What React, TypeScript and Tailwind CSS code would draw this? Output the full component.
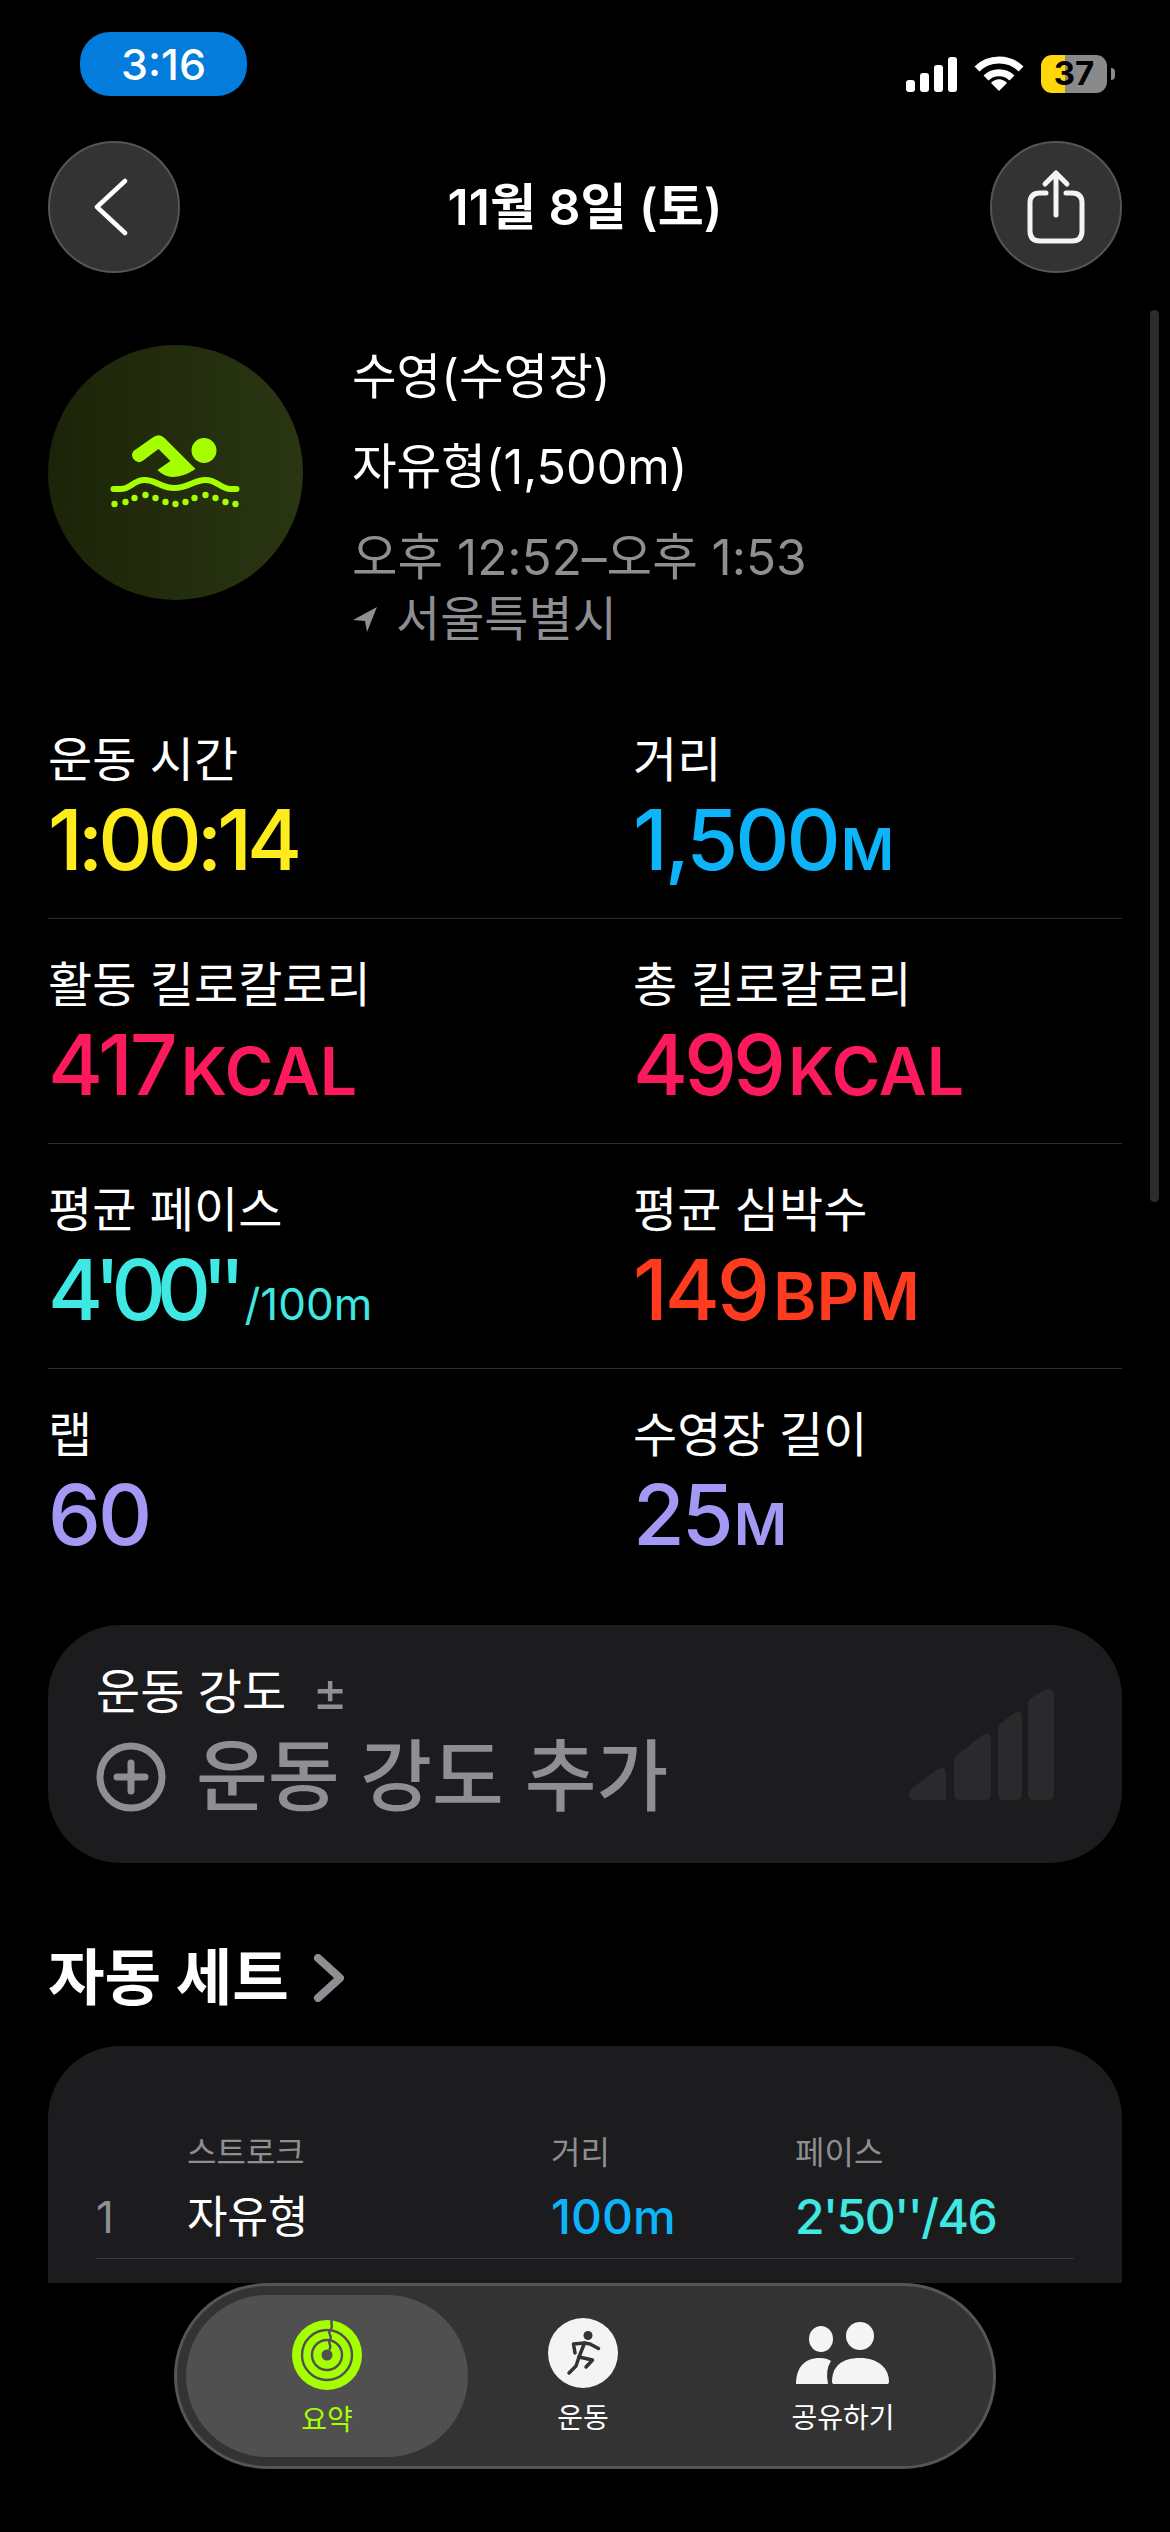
const font = { fontFamily: 'Inter, "Noto Sans CJK KR", sans-serif' };

const metrics = [
  [
    { label: '운동 시간', value: '1:00:14', unit: '', color: 'text-[#fdeb1c]', track: 'tracking-[-5px]' },
    { label: '거리', value: '1,500', unit: 'M', color: 'text-[#0db4f9]', track: 'tracking-[-3px]' },
  ],
  [
    { label: '활동 킬로칼로리', value: '417', unit: 'KCAL', color: 'text-[#fc1a5c]', track: 'tracking-[-3px]' },
    { label: '총 킬로칼로리', value: '499', unit: 'KCAL', color: 'text-[#fc1a5c]', track: 'tracking-[-4px]' },
  ],
  [
    { label: '평균 페이스', value: "4'00''", unit: '/100m', color: 'text-[#3fe8e2]', track: 'tracking-[-9px]', thin: true },
    { label: '평균 심박수', value: '149', unit: 'BPM', color: 'text-[#ff3b1f]', track: 'tracking-[-3px]' },
  ],
  [
    { label: '랩', value: '60', unit: '', color: 'text-[#a498f5]', track: 'tracking-[-3px]' },
    { label: '수영장 길이', value: '25', unit: 'M', color: 'text-[#a498f5]', track: 'tracking-[-3px]' },
  ],
];

const dots = [
  [34, 103], [45, 101], [54, 97], [65, 94], [75, 97], [85, 101], [95, 103],
  [105, 101], [114, 97], [125, 94], [135, 97], [145, 101], [155, 103],
];

function unitClass(unit: string, thin?: boolean) {
  if (thin) return 'ml-[8px] text-[44px] font-normal';
  if (unit === 'M') return 'ml-[3px] text-[58px] font-semibold';
  return 'ml-[6px] text-[66px] font-semibold';
}

function SwimIcon() {
  return (
    <svg width="200" height="130" viewBox="-4.5 7 200 130" fill="#a6ff00">
      <circle cx="123.5" cy="49.5" r="12.5" />
      <path d="M53 50 L73 36 Q79 32 84 37 L115 68 Q103 76 92 76 Q84 76 77 69 L90 60 L78 48 L62 60 Q57 63 53 58 Q50 54 53 50 Z" />
      <path
        d="M33 88 H40 C50 88 53 79 64 79 C76 79 80 87 94 87 C108 87 113 79 125 79 C137 79 140 88 150 88 H156"
        fill="none"
        stroke="#a6ff00"
        strokeWidth="6"
        strokeLinecap="round"
      />
      {dots.map(([x, y]) => (
        <circle key={x} cx={x} cy={y} r="3.2" />
      ))}
    </svg>
  );
}

function StatusBar() {
  return (
    <div className="flex h-[128px] items-start justify-between pl-[80px] pr-[55px] pt-[32px]">
      <div className="flex h-[64px] w-[167px] items-center justify-center rounded-[30px] bg-[#047cdc] text-[43px] font-medium text-white">
        3:16
      </div>
      <div className="mt-[23px] flex items-center">
        <svg width="52" height="35" viewBox="0 0 52 35" fill="#fff">
          <rect x="0" y="23" width="9" height="12" rx="3" />
          <rect x="14" y="16" width="9" height="19" rx="3" />
          <rect x="28" y="8" width="9" height="27" rx="3" />
          <rect x="42" y="0" width="9" height="35" rx="3" />
        </svg>
        <svg className="ml-[16px]" width="50" height="36" viewBox="0 0 50 36" fill="none" stroke="#fff" strokeWidth="7">
          <path d="M3 13 C15 1 35 1 47 13" />
          <path d="M12 22 C19 15 31 15 38 22" />
          <path d="M17 27 L25 35 L33 27 C28 22 22 22 17 27 Z" fill="#fff" stroke="none" />
        </svg>
        <div className="relative ml-[17px] flex h-[38px] w-[66px] items-center justify-center rounded-[11px] bg-[linear-gradient(90deg,#ffd60a_36%,#8a8a8a_36%)] text-[33px] font-bold text-black">
          37
        </div>
        <div className="ml-[4px] h-[12px] w-[4px] rounded-r-full bg-[#8a8a8a]" />
      </div>
    </div>
  );
}

function Header() {
  return (
    <div className="mt-[13px] flex items-center justify-between px-[48px]">
      <button className="grid h-[132px] w-[132px] place-items-center rounded-full border-2 border-[#555] bg-[#333]">
        <svg className="mr-[6px]" width="34" height="58" viewBox="0 0 34 58" fill="none" stroke="#fff" strokeWidth="4.5" strokeLinecap="round" strokeLinejoin="round">
          <path d="M31 3 L3 29 L31 55" />
        </svg>
      </button>
      <h1 className="text-[50px] font-semibold text-white">11월 8일 (토)</h1>
      <button className="grid h-[132px] w-[132px] place-items-center rounded-full border-2 border-[#555] bg-[#333]">
        <svg width="60" height="76" viewBox="0 0 60 76" fill="none" stroke="#f4f4f4" strokeWidth="5" strokeLinecap="round" strokeLinejoin="round">
          <path d="M30 46 V4 M19 15 L30 4 L41 15" />
          <path d="M20 24 H14 Q4 24 4 34 V62 Q4 72 14 72 H46 Q56 72 56 62 V34 Q56 24 46 24 H40" />
        </svg>
      </button>
    </div>
  );
}

function Summary() {
  return (
    <div className="mt-[72px] flex gap-[49px] px-[48px]">
      <div className="grid h-[255px] w-[255px] shrink-0 place-items-center rounded-full bg-[linear-gradient(90deg,#1b2408,#2a3612)]">
        <SwimIcon />
      </div>
      <div className="mt-[1px]">
        <div className="text-[48.5px] leading-[62px] text-white">수영(수영장)</div>
        <div className="mt-[28px] text-[48.5px] leading-[62px] text-white">자유형(1,500m)</div>
        <div className="mt-[28px] text-[49.5px] leading-[62px] text-[#8e8e93]">오후 12:52–오후 1:53</div>
        <div className="flex items-center text-[48px] leading-[62px] text-[#8e8e93]">
          <svg className="mr-[18px]" width="26" height="26" viewBox="0 0 26 26" fill="#8e8e93">
            <path d="M25 1 L1 14 L13 15 L15 26 Z" />
          </svg>
          서울특별시
        </div>
      </div>
    </div>
  );
}

function Metrics() {
  return (
    <div className="mt-[44px] px-[48px]">
      {metrics.map((row, i) => (
        <div key={i} className={`grid h-[225px] grid-cols-[585px_1fr] pt-[36px] ${i < 3 ? 'border-b border-[#2c2c2e]' : ''}`}>
          {row.map((m) => (
            <div key={m.label}>
              <div className="text-[48px] leading-[60px] text-white">{m.label}</div>
              <div className={`mt-[2px] flex items-baseline text-[84px] font-medium leading-[96px] ${m.color}`}>
                <span className={m.track}>{m.value}</span>
                {m.unit && <span className={unitClass(m.unit, m.thin)}>{m.unit}</span>}
              </div>
            </div>
          ))}
        </div>
      ))}
    </div>
  );
}

function IntensityCard() {
  return (
    <div className="mx-[48px] mt-[31px] flex h-[238px] items-end justify-between rounded-[72px] bg-[#1c1c1e] pb-[38px] pl-[48px] pr-[68px]">
      <div>
        <div className="flex items-center text-[48px] leading-[60px] text-white">
          운동 강도
          <span className="ml-[26px] text-[54px] leading-none text-[#8e8e93]">±</span>
        </div>
        <div className="mt-[7px] flex items-center text-[78px] font-medium leading-[96px] text-[#8e8e93]">
          <svg className="mr-[30px]" width="70" height="70" viewBox="0 0 70 70" fill="none" stroke="#8e8e93" strokeWidth="7" strokeLinecap="round">
            <circle cx="35" cy="35" r="31" />
            <path d="M35 21 V49 M21 35 H49" />
          </svg>
          운동 강도 추가
        </div>
      </div>
      <svg className="mb-[25px]" width="145" height="111" viewBox="0 0 145 111" fill="#2a2a2c">
        <path d="M0 105 Q0 102 2 100 L26 82 Q37 74 37 86 V111 H6 Q0 111 0 105 Z" />
        <path d="M45 72 Q45 69 47 67 L71 48 Q82 40 82 52 V105 Q82 111 76 111 H51 Q45 111 45 105 Z" />
        <path d="M89 40 Q89 37 91 35 L104 25 Q113 18 113 30 V105 Q113 111 107 111 H95 Q89 111 89 105 Z" />
        <path d="M119 15 Q119 12 121 10 L135 1 Q145 -3 145 8 V105 Q145 111 139 111 H125 Q119 111 119 105 Z" />
      </svg>
    </div>
  );
}

function SetsSection() {
  return (
    <>
      <div className="mt-[79px] flex items-center px-[48px] text-[61.5px] font-bold leading-[72px] text-white">
        자동 세트
        <svg className="ml-[24px]" width="32" height="48" viewBox="0 0 32 48" fill="none" stroke="#8e8e93" strokeWidth="8" strokeLinecap="round" strokeLinejoin="round">
          <path d="M5 4 L27 24 L5 44" />
        </svg>
      </div>
      <div className="mx-[48px] mt-[32px] h-[400px] rounded-t-[72px] bg-[#1c1c1e] px-[48px] pt-[87px]">
        <div className="grid grid-cols-[91px_364px_244px_1fr] text-[32px] leading-[40px] text-[#8e8e93]">
          <span />
          <span>스트로크</span>
          <span>거리</span>
          <span>페이스</span>
        </div>
        <div className="mt-[15px] grid h-[71px] grid-cols-[91px_364px_244px_1fr] items-center border-b border-[#3a3a3c] pb-[13px] text-[44px] leading-[56px]">
          <span className="text-[#8e8e93]">1</span>
          <span className="text-white">자유형</span>
          <span className="text-[48px] font-medium text-[#0db4f9]">100m</span>
          <span className="text-[48px] font-medium tracking-[-1.5px] text-[#3fe8e2]">2'50''/46</span>
        </div>
        <div className="mt-[18px] grid grid-cols-[91px_364px_244px_1fr] text-[44px] leading-[56px]">
          <span className="text-[#8e8e93]">2</span>
          <span className="text-white">자유형</span>
        </div>
      </div>
    </>
  );
}

function RingsIcon() {
  return (
    <svg width="70" height="70" viewBox="0 0 70 70" fill="none" stroke="#505050" strokeWidth="2.4">
      <circle cx="35" cy="35" r="35" fill="#a6ff00" stroke="none" />
      <circle cx="35" cy="35" r="25" />
      <circle cx="35" cy="35" r="15" />
      <circle cx="35" cy="35" r="5.5" fill="#505050" stroke="none" />
      <path d="M40 0 C38 4 42 7 38 10.5 C35 13 41 16 38 20 C35 23 41 26 37 30" />
    </svg>
  );
}

function RunnerIcon() {
  return (
    <svg width="70" height="70" viewBox="0 0 70 70" fill="none" stroke="#333" strokeWidth="3.5" strokeLinecap="round" strokeLinejoin="round">
      <circle cx="40" cy="17.5" r="4.5" fill="#333" stroke="none" />
      <path d="M36.5 25 L31 39 L44.5 42 L38 49" />
      <path d="M31 39 L28 48 L21 55" />
      <path d="M25.5 26 L27 35 M25.5 26 L36.5 25 L42 26 L50.5 30.5" />
    </svg>
  );
}

function PeopleIcon() {
  return (
    <svg width="94" height="62" viewBox="0 0 94 62" fill="#f4f4f4">
      <ellipse cx="25" cy="17" rx="12" ry="13" />
      <ellipse cx="64" cy="14" rx="14" ry="14" />
      <path d="M0 62 C0 46 8 36 24 36 Q31 36 35 39 Q29 48 32 62 Z" />
      <path d="M36 60 C36 44 46 36 64 36 C82 36 93 46 93 60 Q93 62 90 62 H38 Q36 62 36 60 Z" />
    </svg>
  );
}

function TabBar() {
  return (
    <div className="flex justify-center">
      <nav className="flex h-[186px] w-[822px] items-center rounded-[93px] border-[3px] border-[#555] bg-[#333] px-[9px]">
        <div className="flex h-[162px] w-[282px] flex-col items-center rounded-[81px] bg-[#505050] pt-[25px]">
          <RingsIcon />
          <span className="mt-[12px] text-[28px] leading-[36px] text-[#a6ff00]">요약</span>
        </div>
        <div className="ml-[45px] flex w-[140px] flex-col items-center pt-[2px]">
          <div className="grid h-[70px] w-[70px] place-items-center rounded-full bg-[#f4f4f4]">
            <RunnerIcon />
          </div>
          <span className="mt-[12px] text-[28px] leading-[36px] text-white">운동</span>
        </div>
        <div className="ml-[95px] flex w-[190px] flex-col items-center pt-[2px]">
          <div className="flex h-[70px] items-center">
            <PeopleIcon />
          </div>
          <span className="mt-[12px] text-[28px] leading-[36px] text-white">공유하기</span>
        </div>
      </nav>
    </div>
  );
}

export default function App() {
  return (
    <div className="relative h-[2532px] w-[1170px] overflow-hidden bg-black" style={font}>
      <div className="h-[2283px] overflow-hidden">
        <StatusBar />
        <Header />
        <Summary />
        <Metrics />
        <IntensityCard />
        <SetsSection />
      </div>
      <TabBar />
      {/* scroll indicator */}
      <div className="absolute right-[11px] top-[310px] h-[892px] w-[9px] rounded-full bg-[#2c2c2e]" />
    </div>
  );
}
